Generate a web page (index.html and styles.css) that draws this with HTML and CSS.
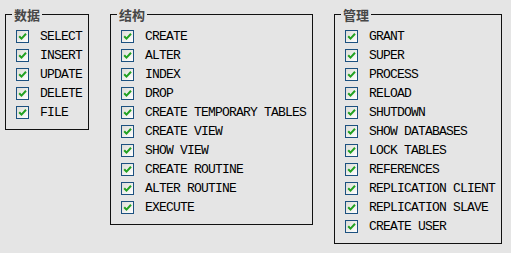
FILE: index.html
```html
<!DOCTYPE html>
<html lang="zh-CN">
<head>
  <meta charset="UTF-8" />
  <title>权限</title>
  <link rel="stylesheet" href="styles.css">
</head>
<body>
  <div class="groups">
    <fieldset class="group group-data">
      <legend>数据</legend>
      <ul class="privs">
        <li><span class="box"><svg viewBox="0 0 11 11"><path d="M2.2 5.2 L4.5 7.6 L9 2.8" /></svg></span>SELECT</li>
        <li><span class="box"><svg viewBox="0 0 11 11"><path d="M2.2 5.2 L4.5 7.6 L9 2.8" /></svg></span>INSERT</li>
        <li><span class="box"><svg viewBox="0 0 11 11"><path d="M2.2 5.2 L4.5 7.6 L9 2.8" /></svg></span>UPDATE</li>
        <li><span class="box"><svg viewBox="0 0 11 11"><path d="M2.2 5.2 L4.5 7.6 L9 2.8" /></svg></span>DELETE</li>
        <li><span class="box"><svg viewBox="0 0 11 11"><path d="M2.2 5.2 L4.5 7.6 L9 2.8" /></svg></span>FILE</li>
      </ul>
    </fieldset>

    <fieldset class="group group-struct">
      <legend>结构</legend>
      <ul class="privs">
        <li><span class="box"><svg viewBox="0 0 11 11"><path d="M2.2 5.2 L4.5 7.6 L9 2.8" /></svg></span>CREATE</li>
        <li><span class="box"><svg viewBox="0 0 11 11"><path d="M2.2 5.2 L4.5 7.6 L9 2.8" /></svg></span>ALTER</li>
        <li><span class="box"><svg viewBox="0 0 11 11"><path d="M2.2 5.2 L4.5 7.6 L9 2.8" /></svg></span>INDEX</li>
        <li><span class="box"><svg viewBox="0 0 11 11"><path d="M2.2 5.2 L4.5 7.6 L9 2.8" /></svg></span>DROP</li>
        <li><span class="box"><svg viewBox="0 0 11 11"><path d="M2.2 5.2 L4.5 7.6 L9 2.8" /></svg></span>CREATE TEMPORARY TABLES</li>
        <li><span class="box"><svg viewBox="0 0 11 11"><path d="M2.2 5.2 L4.5 7.6 L9 2.8" /></svg></span>CREATE VIEW</li>
        <li><span class="box"><svg viewBox="0 0 11 11"><path d="M2.2 5.2 L4.5 7.6 L9 2.8" /></svg></span>SHOW VIEW</li>
        <li><span class="box"><svg viewBox="0 0 11 11"><path d="M2.2 5.2 L4.5 7.6 L9 2.8" /></svg></span>CREATE ROUTINE</li>
        <li><span class="box"><svg viewBox="0 0 11 11"><path d="M2.2 5.2 L4.5 7.6 L9 2.8" /></svg></span>ALTER ROUTINE</li>
        <li><span class="box"><svg viewBox="0 0 11 11"><path d="M2.2 5.2 L4.5 7.6 L9 2.8" /></svg></span>EXECUTE</li>
      </ul>
    </fieldset>

    <fieldset class="group group-admin">
      <legend>管理</legend>
      <ul class="privs">
        <li><span class="box"><svg viewBox="0 0 11 11"><path d="M2.2 5.2 L4.5 7.6 L9 2.8" /></svg></span>GRANT</li>
        <li><span class="box"><svg viewBox="0 0 11 11"><path d="M2.2 5.2 L4.5 7.6 L9 2.8" /></svg></span>SUPER</li>
        <li><span class="box"><svg viewBox="0 0 11 11"><path d="M2.2 5.2 L4.5 7.6 L9 2.8" /></svg></span>PROCESS</li>
        <li><span class="box"><svg viewBox="0 0 11 11"><path d="M2.2 5.2 L4.5 7.6 L9 2.8" /></svg></span>RELOAD</li>
        <li><span class="box"><svg viewBox="0 0 11 11"><path d="M2.2 5.2 L4.5 7.6 L9 2.8" /></svg></span>SHUTDOWN</li>
        <li><span class="box"><svg viewBox="0 0 11 11"><path d="M2.2 5.2 L4.5 7.6 L9 2.8" /></svg></span>SHOW DATABASES</li>
        <li><span class="box"><svg viewBox="0 0 11 11"><path d="M2.2 5.2 L4.5 7.6 L9 2.8" /></svg></span>LOCK TABLES</li>
        <li><span class="box"><svg viewBox="0 0 11 11"><path d="M2.2 5.2 L4.5 7.6 L9 2.8" /></svg></span>REFERENCES</li>
        <li><span class="box"><svg viewBox="0 0 11 11"><path d="M2.2 5.2 L4.5 7.6 L9 2.8" /></svg></span>REPLICATION CLIENT</li>
        <li><span class="box"><svg viewBox="0 0 11 11"><path d="M2.2 5.2 L4.5 7.6 L9 2.8" /></svg></span>REPLICATION SLAVE</li>
        <li><span class="box"><svg viewBox="0 0 11 11"><path d="M2.2 5.2 L4.5 7.6 L9 2.8" /></svg></span>CREATE USER</li>
      </ul>
    </fieldset>
  </div>
</body>
</html>
```

FILE: styles.css
```css
body {
  margin: 0;
  padding: 6px 5px;
  background: #e5e5e5;
  font-family: "Liberation Mono", "DejaVu Sans Mono", monospace;
  color: #000;
}

.groups {
  display: flex;
  align-items: flex-start;
  gap: 21px;
}

.group {
  box-sizing: border-box;
  margin: 0;
  padding: 4px 6px 7px;
  border: 1px solid #111;
  min-width: 0;
}

.group-data { width: 84px; }
.group-struct { width: 203px; }
.group-admin { width: 168px; }

.group legend {
  padding: 0 2px;
  font-family: "Noto Sans CJK SC", sans-serif;
  font-size: 13px;
  font-weight: bold;
  line-height: 17px;
  color: #474747;
}

.privs {
  list-style: none;
  margin: 0;
  padding: 0 0 0 4px;
}

.privs li {
  display: flex;
  align-items: center;
  height: 19px;
  font-size: 13px;
  letter-spacing: -0.8px;
  white-space: nowrap;
}

.box {
  box-sizing: border-box;
  flex: none;
  width: 13px;
  height: 13px;
  margin-right: 11px;
  border: 1px solid #1c5180;
  background: linear-gradient(135deg, #dcdcd7, #fff);
}

.box svg {
  display: block;
  width: 11px;
  height: 11px;
}

.box path {
  fill: none;
  stroke: #21a121;
  stroke-width: 2;
}
```
